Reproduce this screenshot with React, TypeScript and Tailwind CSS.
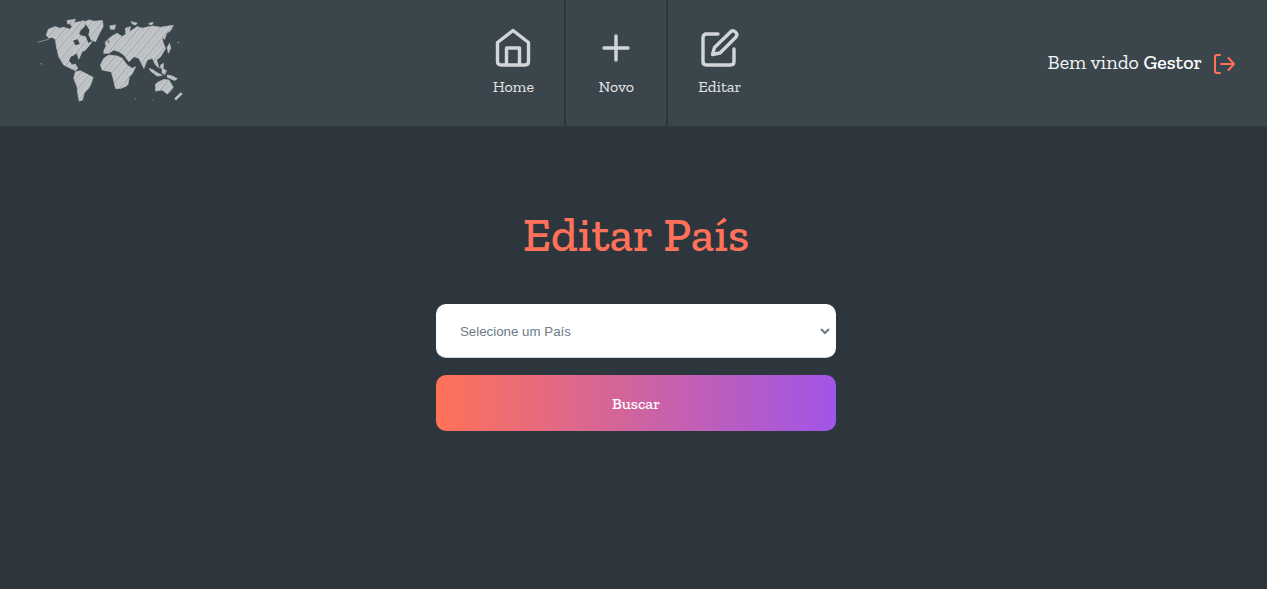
import React from "react";

const slab = "font-['Zilla_Slab','Liberation_Serif',serif]";

function WorldMap() {
  const lands = [
    "78,105 84,88 105,80 118,85 130,82 148,88 155,80 150,74 165,68 180,65 190,62 195,72 190,82 180,90 175,102 185,108 195,110 203,130 215,125 205,138 195,150 185,155 175,178 170,160 160,165 150,170 145,182 155,195 165,192 172,205 165,212 150,205 130,195 115,170 108,140 105,118 95,112 85,115",
    "192,66 205,60 222,64 246,62 248,80 236,102 225,125 212,120 205,105 208,90",
    "165,215 180,212 195,220 218,232 212,250 205,265 192,278 186,300 176,303 172,280 170,260 160,235",
    "240,195 250,175 265,165 290,168 305,175 320,195 335,205 345,200 335,222 322,235 318,258 300,265 285,265 278,235 272,215 255,212 245,210",
    "250,152 258,135 268,125 262,118 275,108 290,100 305,110 320,100 335,90 350,80 365,85 395,78 420,82 458,76 450,92 438,100 432,118 424,112 428,130 435,145 420,170 408,180 416,205 405,195 395,175 380,180 370,205 355,175 340,170 325,185 310,165 295,155 280,150 265,160 250,160",
    "405,252 415,245 430,238 445,240 458,262 448,275 440,282 425,270 405,273",
    "385,205 398,210 410,218 425,226 410,228 392,215",
    "425,205 438,212 432,224 424,218",
    "440,225 455,228 470,236 462,241 440,232",
    "268,78 285,75 282,88 270,88",
    "315,85 330,80 325,100 315,100",
    "462,295 480,278 485,282 466,300",
    "440,142 447,130 450,145 443,160",
    "318,235 326,232 322,255 315,252",
    "140,62 165,58 160,70 142,72",
    "255,125 262,120 262,135 254,134",
    "332,65 350,70 345,75 335,72",
    "385,70 398,68 395,74 386,74",
    "420,195 428,190 428,205 420,205",
  ];
  return (
    <svg width="147" height="84" viewBox="50 55 440 250" className="block">
      <defs>
        <pattern id="hatch" width="24" height="24" patternUnits="userSpaceOnUse" patternTransform="rotate(-50)">
          <rect width="24" height="24" fill="#c9ccce" />
          <rect width="24" height="1.2" y="0" fill="#8d9499" />
          <rect width="24" height="1" y="6" fill="#99a0a4" />
          <rect width="24" height="1.8" y="13" fill="#7d858a" />
          <rect width="24" height="1" y="19" fill="#99a0a4" />
        </pattern>
      </defs>
      {lands.map((p) => (
        <polygon key={p} points={p} fill="url(#hatch)" stroke="url(#hatch)" strokeWidth="2" strokeLinejoin="round" />
      ))}
      <polygon points="158,122 172,118 178,132 165,136" fill="#3b464c" />
      <path d="M52 127 L85 118 M60 190 L66 193 M342 295 L346 297 M470 128 L476 128 M395 300 L398 298" stroke="#aeb3b6" strokeWidth="2" />
    </svg>
  );
}

function NavItem({ label, icon, className }: { label: string; icon: React.ReactNode; className: string }) {
  return (
    <a className={`flex h-full flex-col items-center pt-[26px] ${className}`}>
      <div className="h-[44px] w-[44px] flex items-center justify-center">{icon}</div>
      <span className="mt-[7px] text-[16px] leading-5 text-[#e4e6e8]">{label}</span>
    </a>
  );
}

const stroke = { fill: "none", stroke: "#d3d6d9", strokeWidth: 3.4, strokeLinecap: "round" as const, strokeLinejoin: "round" as const };

export default function App() {
  return (
    <div className={`min-h-[589px] bg-[#2e363d] ${slab}`}>
      <header className="flex h-[126px] items-stretch justify-between bg-[#3b464c]">
        <div className="flex items-start pl-[37px] pr-[2px] pt-[18px]">
          <WorldMap />
        </div>
        <nav className="flex">
          <NavItem
            label="Home"
            className="w-[104px] border-r-2 border-[#2e363d]"
            icon={
              <svg width="36" height="40" viewBox="0 0 36 40" {...stroke}>
                <path d="M18 2.500 L33.500 14.500 V33.500 Q33.500 37 30 37 H6 Q2.500 37 2.500 33.500 V14.500 Z" />
                <path d="M11.500 36 V20 H24.500 V36" />
              </svg>
            }
          />
          <NavItem
            label="Novo"
            className="w-[102px] border-r-2 border-[#2e363d]"
            icon={
              <svg width="30" height="30" viewBox="0 0 30 30" className="-mt-[1px]" {...stroke}>
                <path d="M15 3 V27 M3 15 H27" />
              </svg>
            }
          />
          <NavItem
            label="Editar"
            className="w-[103px]"
            icon={
              <svg width="38" height="40" viewBox="0 0 38 40" {...stroke}>
                <path d="M17 6 H5.500 Q2 6 2 9.500 V33.500 Q2 37 5.500 37 H29.500 Q33 37 33 33.500 V21" />
                <path d="M30 3.500 Q32 2 34.500 4 Q37 6.500 35 9 L19 25 L11.500 26.500 L13.500 19.500 Z" />
              </svg>
            }
          />
        </nav>
        <div className="flex items-center pr-[32px] pb-[2px]">
          <span className="text-[20px] text-[#f3f4f5]">
            Bem vindo <span className="font-medium text-white">Gestor</span>
          </span>
          <svg width="21" height="20" viewBox="0 0 21 20" className="ml-[12px] mt-[3px]" fill="none" stroke="#ff7058" strokeWidth="2" strokeLinecap="round" strokeLinejoin="round">
            <path d="M6 1 H3 Q1 1 1 3 V17 Q1 19 3 19 H6" />
            <path d="M7 10 H20 M14.500 4 L20 10 L14.500 16" />
          </svg>
        </div>
      </header>
      <main className="flex flex-col items-center pl-[5px]">
        <h1 className="mt-[83px] text-[48px] leading-[52px] font-medium text-[#ff7259]">Editar País</h1>
        <form className="mt-[43px] flex w-[400px] flex-col gap-[17px]">
          <select className="h-[54px] w-full rounded-[10px] border border-[#ced4da] border-t-white border-l-white border-r-[3px] border-r-white bg-white pl-[19px] pr-0 text-[13.3px] text-[#6c7a86] font-['Liberation_Sans',sans-serif] outline-none">
            <option>Selecione um País</option>
          </select>
          <button type="button" className="h-[56px] w-full rounded-[10px] bg-[linear-gradient(to_right,#ff7259,#a055e8)] pt-[2px] text-[16px] font-medium text-white">
            Buscar
          </button>
        </form>
      </main>
    </div>
  );
}
